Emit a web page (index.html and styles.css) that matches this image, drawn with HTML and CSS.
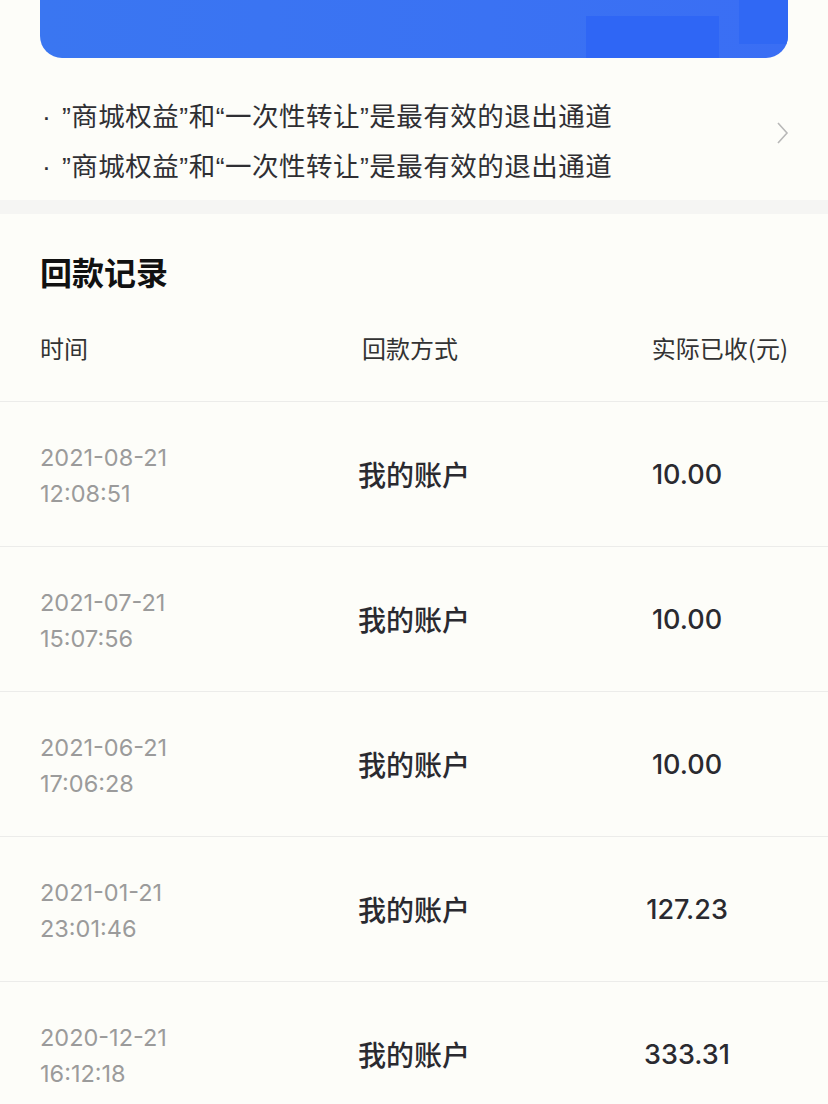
FILE: index.html
```html
<!DOCTYPE html>
<html lang="zh">
<head>
<meta charset="utf-8">
<link rel="stylesheet" href="styles.css">
</head>
<body>
<div class="page">
  <div class="banner">
    <div class="banner-rect"></div>
    <div class="banner-square"></div>
  </div>
  <div class="notice">
    <div class="notice-lines">
      <div class="notice-line"><span class="dot">·</span>”商城权益”和“一次性转让”是最有效的退出通道</div>
      <div class="notice-line"><span class="dot">·</span>”商城权益”和“一次性转让”是最有效的退出通道</div>
    </div>
    <svg class="chevron" width="14" height="24" viewBox="0 0 14 24"><path d="M2 2 L11 12 L2 22" fill="none" stroke="#b8b8b8" stroke-width="1.6"/></svg>
  </div>
  <div class="band"></div>
  <div class="records">
    <h2 class="title">回款记录</h2>
    <div class="head">
      <div class="c1">时间</div>
      <div class="c2">回款方式</div>
      <div class="c3">实际已收(元)</div>
    </div>
    <div class="row">
      <div class="c1 date"><div>2021-08-21</div><div>12:08:51</div></div>
      <div class="c2 way">我的账户</div>
      <div class="c3 amt">10.00</div>
    </div>
    <div class="row">
      <div class="c1 date"><div>2021-07-21</div><div>15:07:56</div></div>
      <div class="c2 way">我的账户</div>
      <div class="c3 amt">10.00</div>
    </div>
    <div class="row">
      <div class="c1 date"><div>2021-06-21</div><div>17:06:28</div></div>
      <div class="c2 way">我的账户</div>
      <div class="c3 amt">10.00</div>
    </div>
    <div class="row">
      <div class="c1 date"><div>2021-01-21</div><div>23:01:46</div></div>
      <div class="c2 way">我的账户</div>
      <div class="c3 amt">127.23</div>
    </div>
    <div class="row">
      <div class="c1 date"><div>2020-12-21</div><div>16:12:18</div></div>
      <div class="c2 way">我的账户</div>
      <div class="c3 amt">333.31</div>
    </div>
  </div>
</div>
</body>
</html>
```
FILE: styles.css
```css
html, body {
  margin: 0;
  padding: 0;
  background: #fdfdf9;
}
body {
  font-family: "Noto Sans CJK SC", "Noto Sans", sans-serif;
  color: #222;
  width: 828px;
  height: 1104px;
  overflow: hidden;
}
.page {
  display: flex;
  flex-direction: column;
}
.banner {
  position: relative;
  margin: 0 40px;
  height: 58px;
  border-radius: 0 0 22px 22px;
  background: linear-gradient(90deg, #3a76f1 0%, #3a72f3 60%, #3a6ef4 100%);
  overflow: hidden;
}
.banner-rect {
  position: absolute;
  left: 546px;
  top: 16px;
  width: 133px;
  height: 42px;
  background: #2f66f5;
}
.banner-square {
  position: absolute;
  left: 699px;
  top: 0;
  width: 49px;
  height: 44px;
  background: #3068f4;
}
.notice {
  height: 142px;
  display: flex;
  align-items: flex-start;
  justify-content: space-between;
  padding: 34px 40px 0 40px;
  box-sizing: border-box;
}
.notice-lines {
  display: flex;
  flex-direction: column;
}
.notice-line {
  font-family: "Liberation Sans", "Noto Sans CJK SC", sans-serif;
  font-size: 26.5px;
  line-height: 50px;
  letter-spacing: 0.5px;
  color: #2f2f33;
}
.dot {
  display: inline-block;
  width: 22px;
  padding-left: 2px;
  box-sizing: border-box;
}
.chevron {
  margin-right: -2px;
  margin-top: 29px;
}
.band {
  height: 14px;
  background: #f5f5f3;
}
.records {
  display: flex;
  flex-direction: column;
}
.title {
  margin: 0;
  padding: 35px 40px 0;
  height: 118px;
  box-sizing: border-box;
  font-size: 32px;
  line-height: 44px;
  font-weight: 700;
  color: #111;
}
.head {
  display: grid;
  grid-template-columns: 322px 1fr 200px;
  align-items: start;
  padding: 0 40px;
  height: 70px;
  box-sizing: border-box;
  border-bottom: 1.5px solid #ececea;
  font-size: 24px;
  line-height: 32px;
  color: #333;
}
.head .c3 {
  text-align: right;
}
.row {
  display: grid;
  grid-template-columns: 318px 1fr 200px;
  align-items: center;
  padding: 0 40px;
  height: 145px;
  box-sizing: border-box;
  border-bottom: 1.5px solid #ececea;
}
.date {
  font-family: "Inter", "Noto Sans", sans-serif;
  font-size: 23.5px;
  line-height: 36px;
  color: #9b9b9b;
  padding-top: 4px;
}
.way {
  font-size: 28px;
  color: #2a2a30;
  font-weight: 500;
}
.amt {
  font-family: "Inter", "Noto Sans", sans-serif;
  font-size: 27px;
  font-weight: 500;
  color: #2a2a30;
  text-align: center;
  width: 174px;
  justify-self: start;
  margin-left: 12px;
}
```
